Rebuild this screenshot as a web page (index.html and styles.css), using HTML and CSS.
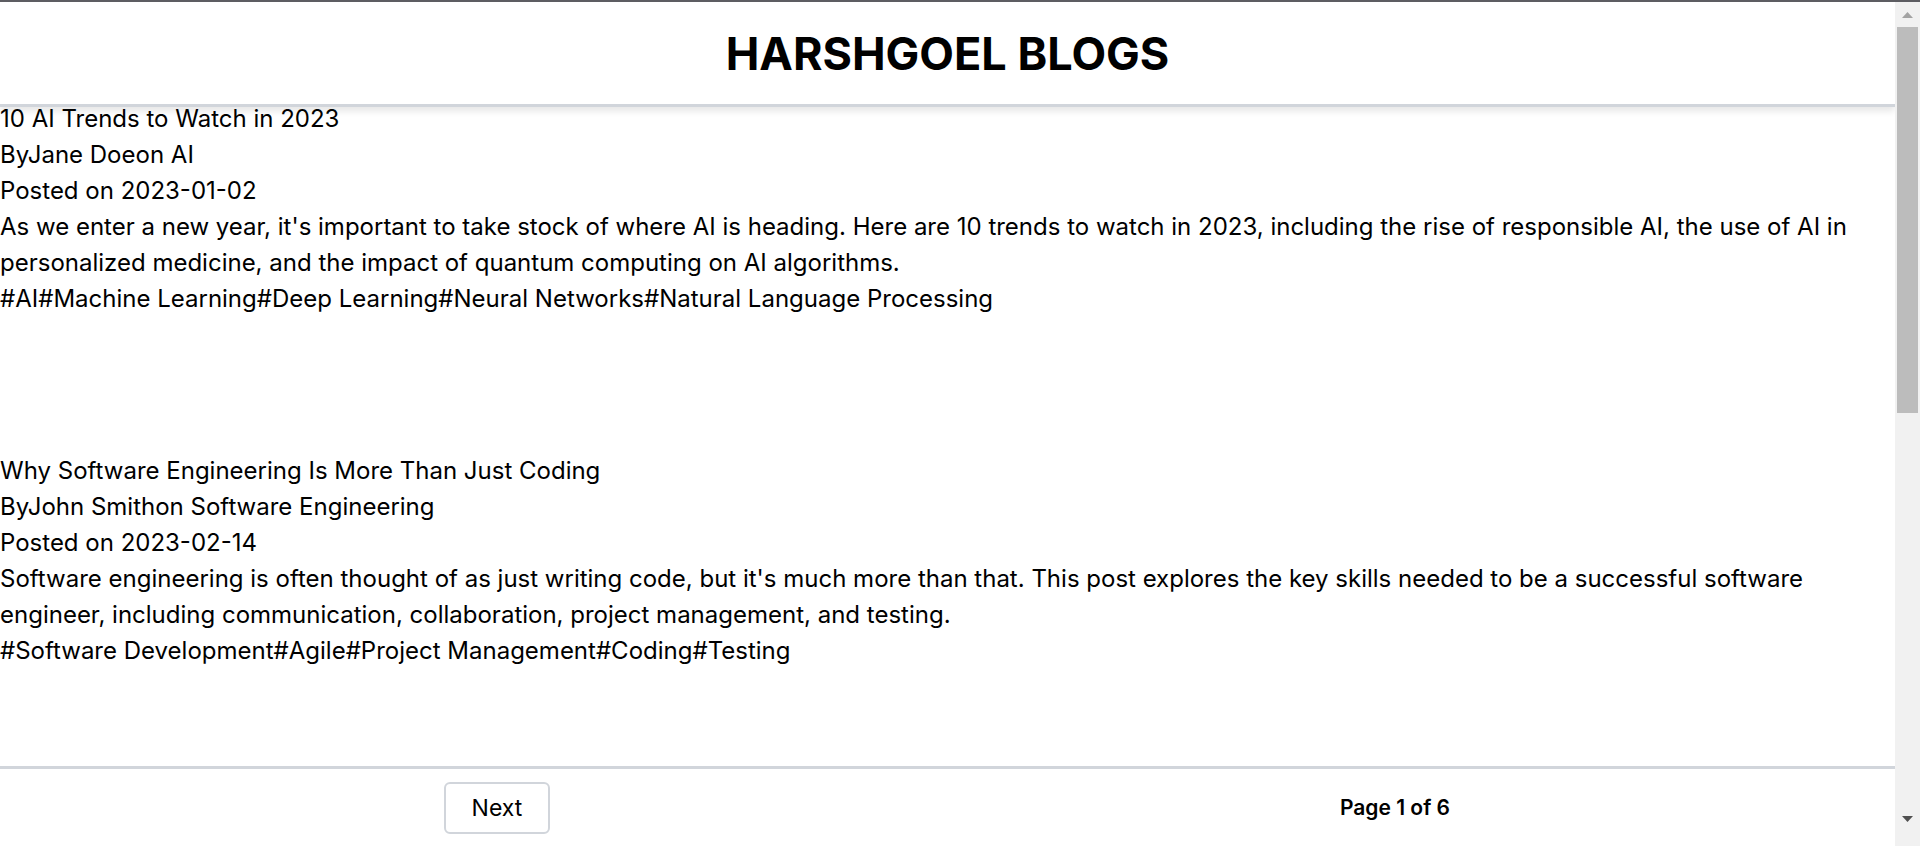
FILE: index.html
```html
<!DOCTYPE html>
<html lang="en">
<head>
<meta charset="utf-8">
<title>HARSHGOEL BLOGS</title>
<link rel="stylesheet" href="styles.css">
</head>
<body>
<div class="topbar"></div>
<div class="window">
  <div class="app">
    <header class="site-header">
      <h1 class="site-title">HARSHGOEL BLOGS</h1>
    </header>
    <main class="posts">
      <article class="post">
        <div class="post-title">10 AI Trends to Watch in 2023</div>
        <div class="post-meta">By<span>Jane Doe</span>on <span>AI</span></div>
        <div class="post-date">Posted on 2023-01-02</div>
        <div class="post-body">As we enter a new year, it's important to take stock of where AI is heading. Here are 10 trends to watch in 2023, including the rise of responsible AI, the use of AI in personalized medicine, and the impact of quantum computing on AI algorithms.</div>
        <div class="post-tags"><span>#AI</span><span>#Machine Learning</span><span>#Deep Learning</span><span>#Neural Networks</span><span>#Natural Language Processing</span></div>
      </article>
      <article class="post">
        <div class="post-title">Why Software Engineering Is More Than Just Coding</div>
        <div class="post-meta">By<span>John Smith</span>on <span>Software Engineering</span></div>
        <div class="post-date">Posted on 2023-02-14</div>
        <div class="post-body">Software engineering is often thought of as just writing code, but it's much more than that. This post explores the key skills needed to be a successful software engineer, including communication, collaboration, project management, and testing.</div>
        <div class="post-tags"><span>#Software Development</span><span>#Agile</span><span>#Project Management</span><span>#Coding</span><span>#Testing</span></div>
      </article>
    </main>
    <footer class="pager">
      <div class="pager-cell"><button class="pager-btn" type="button">Next</button></div>
      <div class="pager-cell"><span class="pager-info">Page 1 of 6</span></div>
    </footer>
  </div>
  <div class="scrollbar" aria-hidden="true">
    <div class="sb-btn">
      <svg width="11" height="6" viewBox="0 0 11 6"><path d="M5.5 0 L11 6 L0 6 Z" fill="#a3a3a3"/></svg>
    </div>
    <div class="sb-thumb"></div>
    <div class="sb-track"></div>
    <div class="sb-btn">
      <svg width="11" height="6" viewBox="0 0 11 6"><path d="M0 0 L11 0 L5.5 6 Z" fill="#505050"/></svg>
    </div>
  </div>
</div>
</body>
</html>
```
FILE: styles.css
```css
html, body {
  margin: 0;
  padding: 0;
  height: 100%;
  overflow: hidden;
  background: #ffffff;
}
body {
  font-family: Inter, "Noto Sans", "Liberation Sans", sans-serif;
  color: #000;
}
.topbar {
  height: 2px;
  background: #5d5d62;
}
.window {
  height: 844px;
  display: flex;
}
.app {
  flex: 1;
  min-width: 0;
  display: flex;
  flex-direction: column;
  overflow: hidden;
}
.site-header {
  position: relative;
  z-index: 1;
  flex: none;
  height: 102px;
  background: #fff;
  border-bottom: 3px solid #d1d5db;
  box-shadow: 0 4px 7px rgba(0, 0, 0, 0.1);
  display: flex;
  align-items: center;
  justify-content: center;
}
.site-title {
  margin: 0;
  font-size: 45px;
  font-weight: 700;
  line-height: 1;
}
.posts {
  flex: 1;
  min-height: 0;
  overflow: hidden;
  margin-top: -6px;
}
.post {
  font-size: 24px;
  line-height: 36px;
  padding-bottom: 136px;
}
.pager {
  flex: none;
  background: #fff;
  border-top: 3px solid #d1d5db;
  height: 77px;
  display: grid;
  grid-template-columns: 1fr 1fr;
  align-items: center;
  justify-items: center;
  padding: 0 51px 0 48px;
}
.pager-btn {
  font-family: inherit;
  font-size: 23px;
  color: #000;
  background: #fff;
  border: 2px solid #d1d5db;
  border-radius: 6px;
  width: 106px;
  height: 52px;
  padding: 0;
}
.pager-info {
  font-size: 21px;
  font-weight: 600;
}
.scrollbar {
  width: 25px;
  flex: none;
  background: #f1f1f1;
  display: flex;
  flex-direction: column;
  padding-bottom: 15px;
  box-sizing: border-box;
}
.sb-btn {
  height: 25px;
  flex: none;
  display: flex;
  align-items: center;
  justify-content: center;
}
.sb-thumb {
  height: 386px;
  margin: 0 2px;
  background: #bcbcbc;
  flex: none;
}
.sb-track {
  flex: 1;
}
```
